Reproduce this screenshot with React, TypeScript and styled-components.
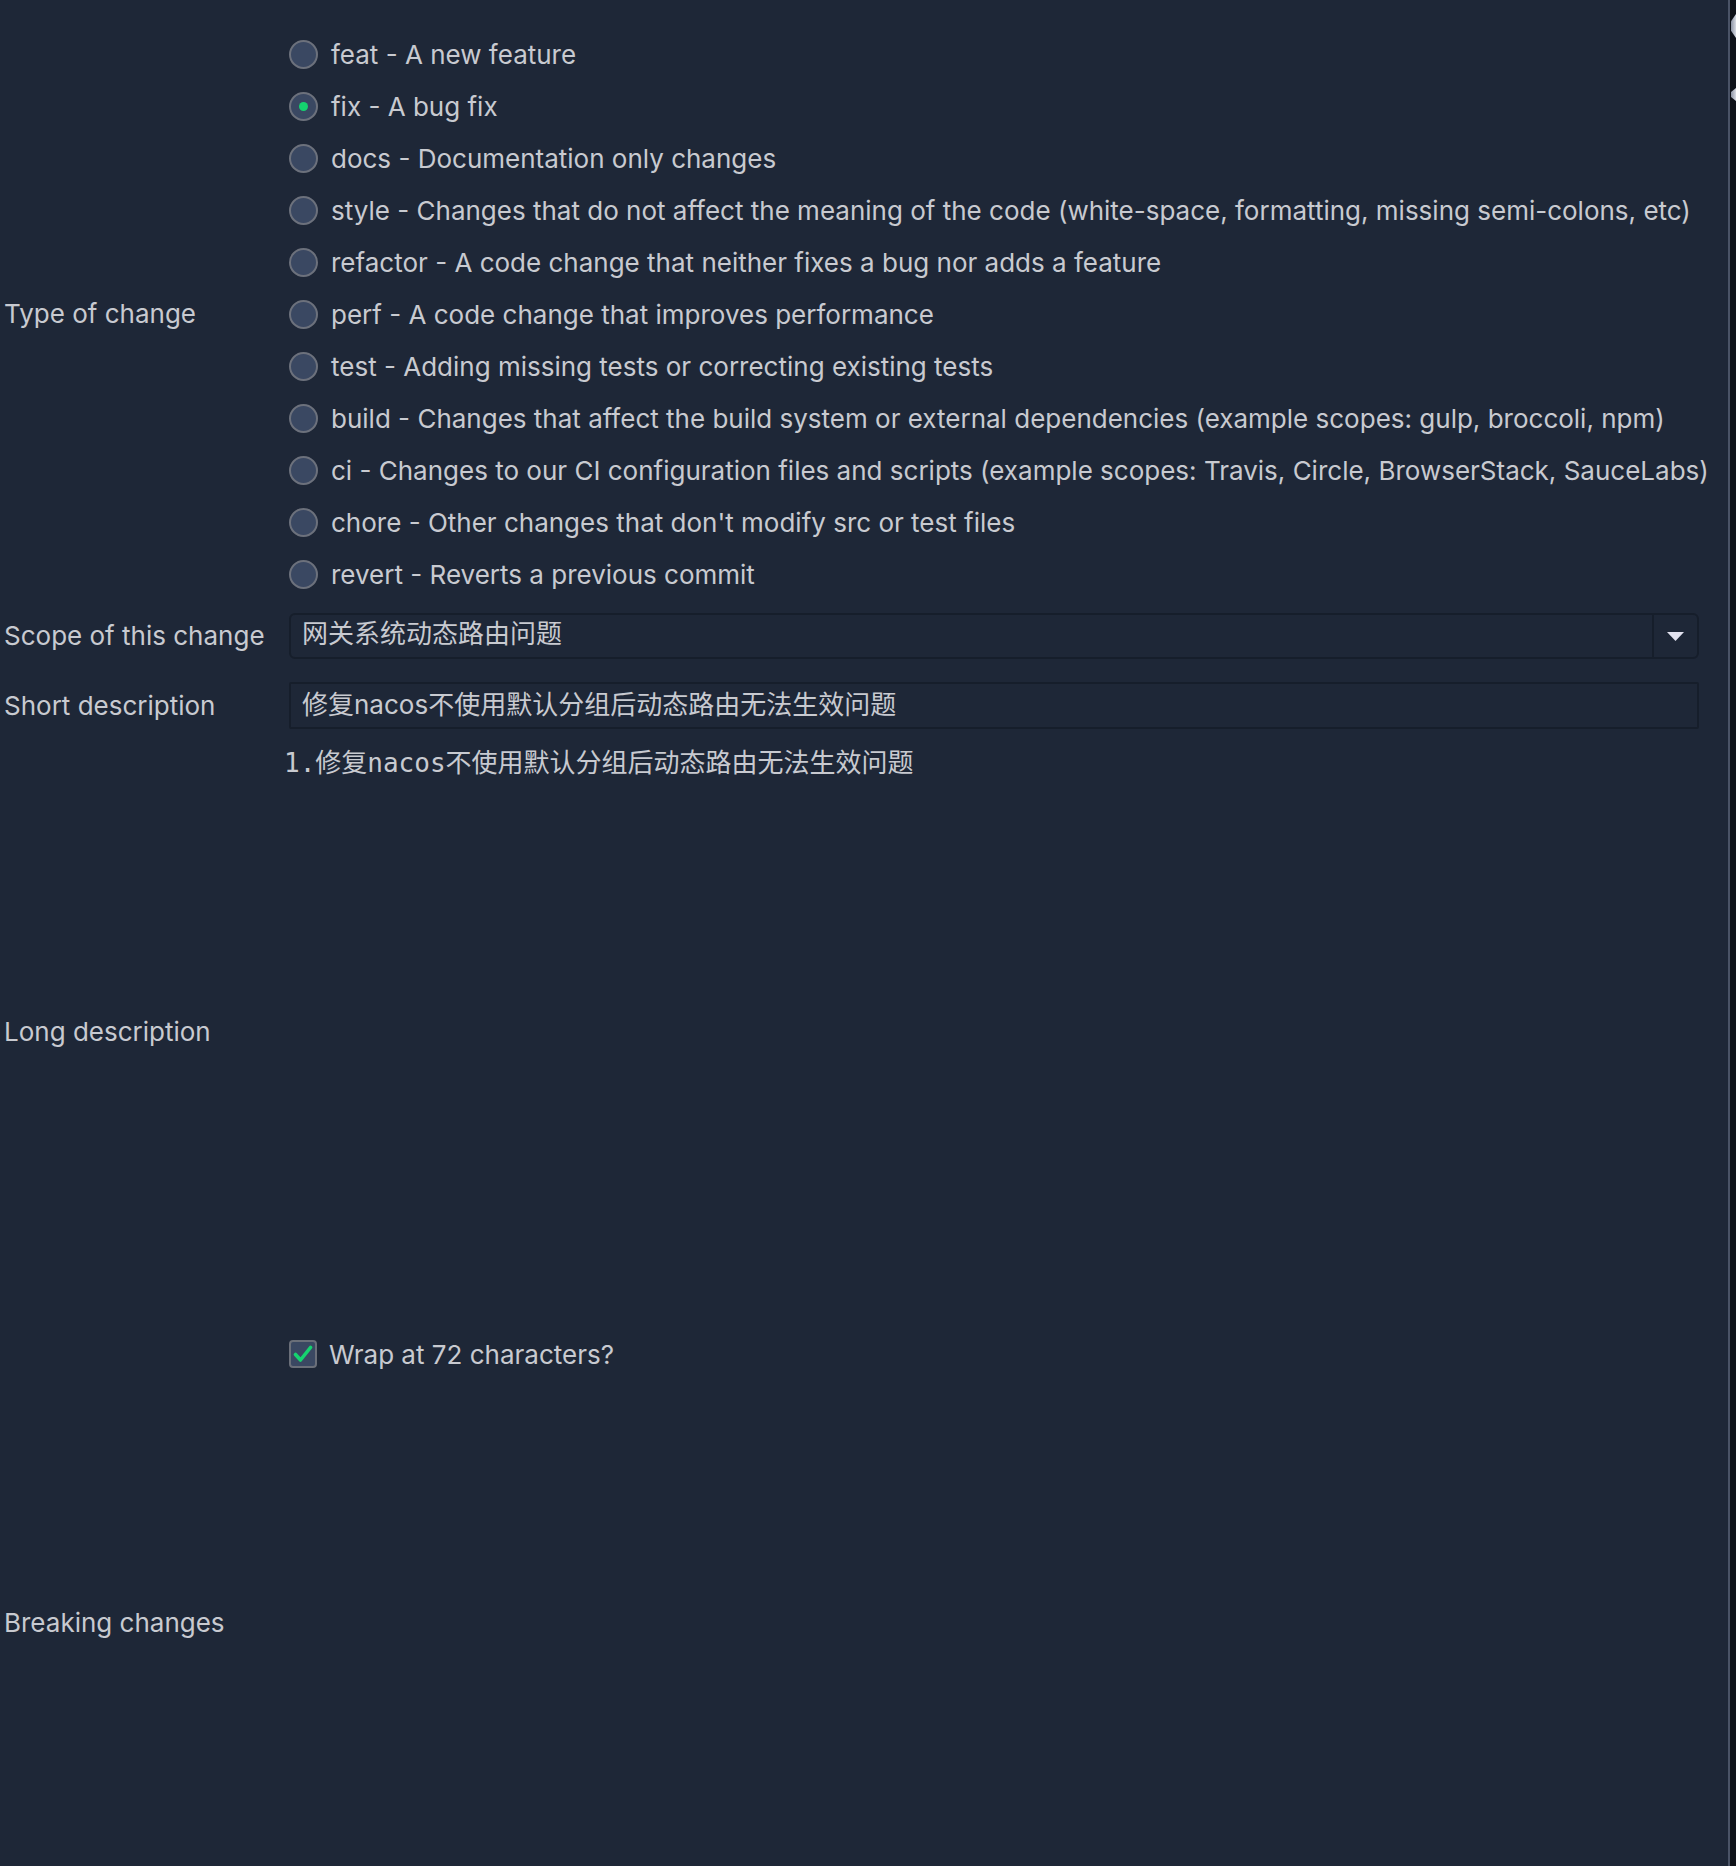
import React from "react";
import styled, { createGlobalStyle } from "styled-components";

const GlobalStyle = createGlobalStyle`
  html, body {
    margin: 0;
    padding: 0;
    background: #1e2737;
  }
  body {
    font-family: "Inter", "Noto Sans CJK SC", sans-serif;
    font-size: 26px;
    color: #c8cad0;
  }
`;

const Page = styled.div`
  display: flex;
  width: 1736px;
  min-height: 1866px;
  background: #1e2737;
  overflow: hidden;
`;

const Main = styled.div`
  flex: 1;
  min-width: 0;
  display: flex;
  flex-direction: column;
  padding-right: 29px;
`;

const EdgeStrip = styled.div`
  flex-shrink: 0;
  width: 6px;
  border-left: 2px solid #4a5366;
  background: #0f1219;
  display: flex;
  flex-direction: column;
  gap: 50px;
  padding-top: 14px;
`;

const EdgeMark = styled.div<{ $h: number }>`
  height: ${(p) => p.$h}px;
  width: 5px;
  margin-left: 1px;
  background: linear-gradient(90deg, #8c93a3, #d7dae2);
  clip-path: polygon(0 30%, 100% 0, 100% 100%, 0 70%);
`;

const Row = styled.div<{ $top?: number; $height?: number }>`
  display: grid;
  grid-template-columns: 289px 1fr;
  align-items: center;
  margin-top: ${(p) => p.$top ?? 0}px;
  ${(p) => (p.$height ? `height: ${p.$height}px;` : "")}
`;

const Label = styled.div`
  padding-left: 4px;
  white-space: nowrap;
  line-height: 36px;
`;

const RadioGroup = styled.div`
  display: flex;
  flex-direction: column;
`;

const RadioItem = styled.label`
  display: flex;
  align-items: center;
  gap: 13px;
  height: 52px;
  white-space: nowrap;
`;

const RadioCircle = styled.span<{ $checked?: boolean }>`
  width: 29px;
  height: 29px;
  box-sizing: border-box;
  border-radius: 50%;
  border: 2px solid #6c717c;
  background: #3a4862;
  display: flex;
  align-items: center;
  justify-content: center;
  flex-shrink: 0;
  &::after {
    content: "";
    display: ${(p) => (p.$checked ? "block" : "none")};
    width: 9px;
    height: 9px;
    border-radius: 50%;
    background: #15d36f;
  }
`;

const Select = styled.div`
  display: flex;
  height: 46px;
  box-sizing: border-box;
  border: 2px solid #161e2b;
  border-radius: 6px;
`;

const SelectValue = styled.div`
  flex: 1;
  display: flex;
  align-items: center;
  padding-left: 11px;
  padding-bottom: 9px;
`;

const SelectArrow = styled.div`
  width: 43px;
  border-left: 2px solid #161e2b;
  display: flex;
  align-items: center;
  justify-content: center;
`;

const TextInput = styled.div`
  height: 47px;
  box-sizing: border-box;
  border: 2px solid #161e2b;
  border-radius: 2px;
  display: flex;
  align-items: center;
  padding-left: 11px;
  padding-bottom: 6px;
`;

const TextArea = styled.div<{ $height: number }>`
  height: ${(p) => p.$height}px;
  margin-left: -5px;
  font-family: "DejaVu Sans Mono", "Noto Sans CJK SC", monospace;
  font-size: 26px;
  line-height: 36px;
  white-space: pre;
`;

const CheckItem = styled.label`
  display: flex;
  align-items: center;
  gap: 12px;
  white-space: nowrap;
`;

const CheckBox = styled.span`
  width: 28px;
  height: 28px;
  box-sizing: border-box;
  border: 2px solid #6a6f79;
  border-radius: 4px;
  background: #3a4862;
  display: flex;
  align-items: center;
  justify-content: center;
`;

const types = [
  "feat - A new feature",
  "fix - A bug fix",
  "docs - Documentation only changes",
  "style - Changes that do not affect the meaning of the code (white-space, formatting, missing semi-colons, etc)",
  "refactor - A code change that neither fixes a bug nor adds a feature",
  "perf - A code change that improves performance",
  "test - Adding missing tests or correcting existing tests",
  "build - Changes that affect the build system or external dependencies (example scopes: gulp, broccoli, npm)",
  "ci - Changes to our CI configuration files and scripts (example scopes: Travis, Circle, BrowserStack, SauceLabs)",
  "chore - Other changes that don't modify src or test files",
  "revert - Reverts a previous commit",
];

export default function App() {
  return (
    <>
      <GlobalStyle />
      <Page>
        <Main>
          <Row $top={28}>
            <Label>Type of change</Label>
            <RadioGroup>
              {types.map((t, i) => (
                <RadioItem key={t}>
                  <RadioCircle $checked={i === 1} />
                  <span>{t}</span>
                </RadioItem>
              ))}
            </RadioGroup>
          </Row>
          <Row $top={13}>
            <Label>Scope of this change</Label>
            <Select>
              <SelectValue>网关系统动态路由问题</SelectValue>
              <SelectArrow>
                <svg width="17" height="9" viewBox="0 0 17 9">
                  <path d="M0 0 H17 L8.5 9 Z" fill="#e2e2ef" />
                </svg>
              </SelectArrow>
            </Select>
          </Row>
          <Row $top={23}>
            <Label>Short description</Label>
            <TextInput>修复nacos不使用默认分组后动态路由无法生效问题</TextInput>
          </Row>
          <Row $top={16} $height={574}>
            <Label>Long description</Label>
            <TextArea $height={574}>1.修复nacos不使用默认分组后动态路由无法生效问题</TextArea>
          </Row>
          <Row $top={9} $height={52}>
            <span />
            <CheckItem>
              <CheckBox>
                <svg width="20" height="18" viewBox="0 0 20 18">
                  <path
                    d="M2.5 9.5 L7.5 15 L17.5 2.5"
                    fill="none"
                    stroke="#15d36f"
                    strokeWidth="3.6"
                    strokeLinecap="round"
                    strokeLinejoin="round"
                  />
                </svg>
              </CheckBox>
              <span>Wrap at 72 characters?</span>
            </CheckItem>
          </Row>
          <Row $height={486}>
            <Label>Breaking changes</Label>
            <TextArea $height={486} />
          </Row>
        </Main>
        <EdgeStrip>
          <EdgeMark $h={24} />
          <EdgeMark $h={13} />
        </EdgeStrip>
      </Page>
    </>
  );
}
